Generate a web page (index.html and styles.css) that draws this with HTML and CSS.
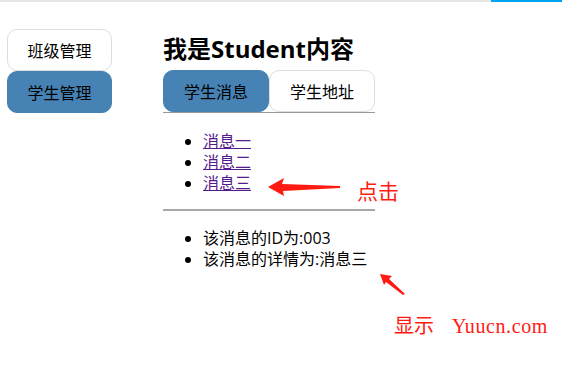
FILE: index.html
```html
<!DOCTYPE html>
<html lang="zh-CN">

<head>
      <meta charset="UTF-8">
      <meta name="viewport" content="width=device-width, initial-scale=1.0">
      <title>路由嵌套</title>
      <link rel="stylesheet" href="styles.css">
</head>

<body>
      <!-- 顶部加载条 -->
      <div class="top-bar">
            <div class="top-bar-rest"></div>
            <div class="top-bar-progress"></div>
      </div>

      <div class="app-wrapper">
            <div class="nav-list">
                  <a class="nav-item">班级管理</a>
                  <a class="nav-item active">学生管理</a>
            </div>

            <div class="panel">
                  <h2 class="heading">我是Student内容</h2>
                  <div class="tabs">
                        <a class="tab active">学生消息</a>
                        <a class="tab">学生地址</a>
                  </div>

                  <ul class="msg-list">
                        <li><a href="#">消息一</a></li>
                        <li><a href="#">消息二</a></li>
                        <li><a href="#">消息三</a></li>
                  </ul>
                  <hr>
                  <ul class="detail-list">
                        <li>该消息的ID为:003</li>
                        <li>该消息的详情为:消息三</li>
                  </ul>
            </div>
      </div>

      <!-- 标注 -->
      <svg class="mark mark-click" width="80" height="24" viewBox="0 0 80 24">
            <path d="M0 10 L16 1 L14 7 L72 9 L72 11 L15 14 L16 19 Z" fill="#ff1a12" />
      </svg>
      <span class="note note-click">点击</span>

      <svg class="mark mark-show" width="30" height="26" viewBox="0 0 30 26">
            <path d="M1 1 L13 3 L10 6 L26 21 L24 22 L7 9 L5 12 Z" fill="#ff1a12" />
      </svg>
      <span class="note note-show">显示</span>
      <span class="note note-site">Yuucn.com</span>
</body>

</html>
```

FILE: styles.css
```css
* {
      box-sizing: border-box;
}

html,
body {
      height: 100%;
}

body {
      margin: 0;
      position: relative;
      min-height: 381px;
      font-family: "Open Sans", "Noto Sans CJK SC", sans-serif;
      font-size: 16px;
      color: #000;
}

.top-bar {
      display: flex;
      height: 2px;
}

.top-bar-rest {
      flex: 1;
      background-color: #e6e6e6;
}

.top-bar-progress {
      width: 71px;
      background-color: #00a2f2;
}

.app-wrapper {
      display: flex;
      padding: 27px 0 0 7px;
}

.nav-list {
      display: flex;
      flex-direction: column;
      width: 105px;
}

.nav-item,
.tab {
      display: flex;
      justify-content: center;
      align-items: center;
      height: 42px;
      border: 1px solid #dedede;
      border-radius: 10px;
      color: #000;
      font-size: 16px;
      text-decoration: none;
      background-color: #fff;
}

.nav-item.active,
.tab.active {
      background-color: #4682b4;
      border-color: #4682b4;
}

.panel {
      width: 212px;
      margin-left: 51px;
}

.heading {
      margin: 0;
      font-size: 24px;
      line-height: 34px;
      font-weight: 700;
      margin-top: 3px;
      white-space: nowrap;
}

.tabs {
      display: flex;
      margin-top: 4px;
      border-bottom: 1px solid #999;
}

.tab {
      width: 106px;
}

ul {
      margin: 0;
      padding-left: 40px;
      line-height: 21px;
}

.msg-list {
      margin-top: 18px;
}

.msg-list a {
      color: #551a8b;
}

hr {
      margin: 15px 0 0;
      border: 0;
      border-top: 2px solid #a8a8a8;
}

.detail-list {
      margin-top: 17px;
}

.mark {
      position: absolute;
}

.mark-click {
      left: 268px;
      top: 177px;
}

.mark-show {
      left: 379px;
      top: 273px;
}

.note {
      position: absolute;
      color: #ff1a12;
      line-height: 1;
}

.note-click {
      left: 357px;
      top: 181px;
      font-size: 21px;
}

.note-show {
      left: 394px;
      top: 316px;
      font-size: 20px;
}

.note-site {
      left: 452px;
      top: 316px;
      font-family: "Liberation Serif", serif;
      font-size: 20px;
      letter-spacing: 0.6px;
}
```
